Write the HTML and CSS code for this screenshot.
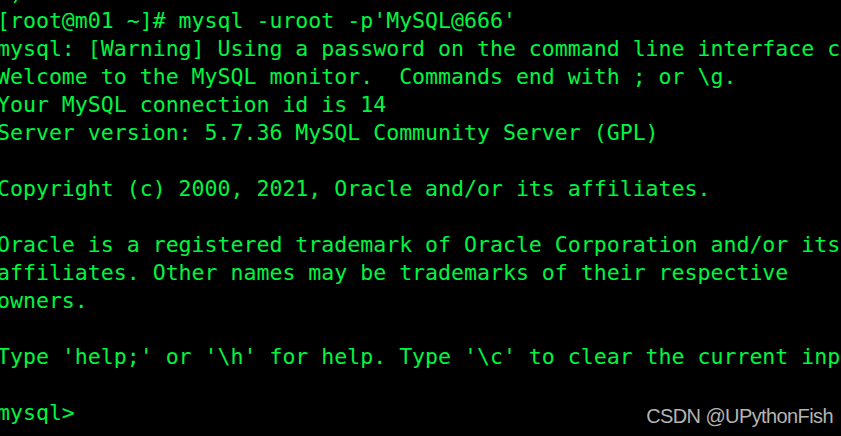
FILE: index.html
```html
<!DOCTYPE html>
<html>
<head>
<meta charset="utf-8">
<link rel="stylesheet" href="styles.css">
</head>
<body>
<div class="term">
<pre class="screen"> )
[root@m01 ~]# mysql -uroot -p'MySQL@666'
mysql: [Warning] Using a password on the command line interface can be insecure.
Welcome to the MySQL monitor.  Commands end with ; or \g.
Your MySQL connection id is 14
Server version: 5.7.36 MySQL Community Server (GPL)

Copyright (c) 2000, 2021, Oracle and/or its affiliates.

Oracle is a registered trademark of Oracle Corporation and/or its
affiliates. Other names may be trademarks of their respective
owners.

Type 'help;' or '\h' for help. Type '\c' to clear the current input statement.

mysql></pre>
<div class="watermark">CSDN @UPythonFish</div>
</div>
</body>
</html>
```
FILE: styles.css
```css
html, body {
  margin: 0;
  padding: 0;
  background: #000;
  overflow: hidden;
}
.term {
  position: relative;
  width: 841px;
  height: 436px;
  overflow: hidden;
  background: #000;
}
.screen {
  margin: -21px 0 0 -3px;
  padding: 0;
  font-family: "DejaVu Sans Mono", "Liberation Mono", monospace;
  font-size: 21.55px;
  line-height: 28px;
  color: #00f541;
  white-space: pre;
}
.watermark {
  position: absolute;
  right: 8px;
  bottom: 8px;
  font-family: "Liberation Sans", Arial, sans-serif;
  font-size: 20px;
  letter-spacing: -0.6px;
  color: #b4b4b4;
}
```
